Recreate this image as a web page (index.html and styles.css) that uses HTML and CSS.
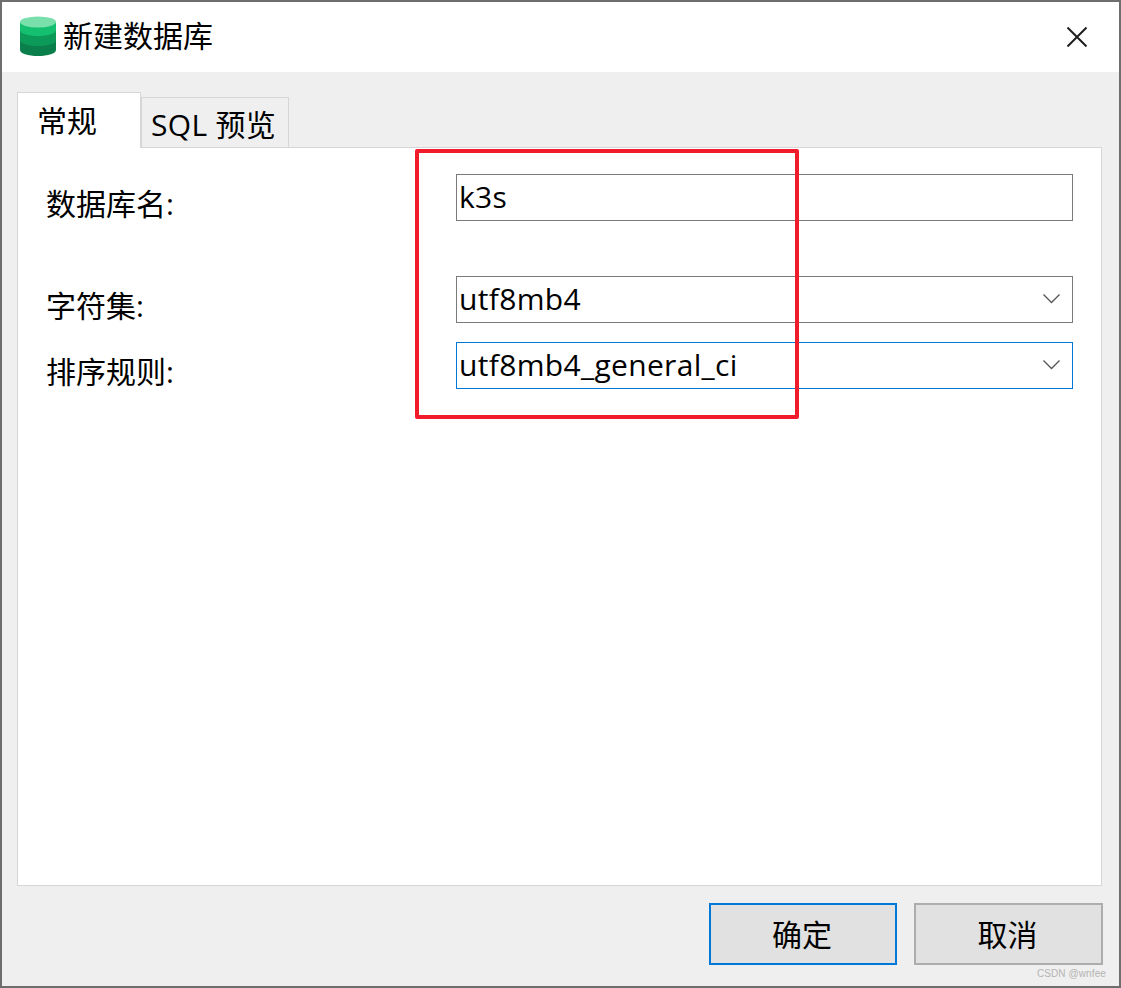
FILE: index.html
```html
<!DOCTYPE html>
<html lang="zh-CN">
<head>
<meta charset="utf-8">
<title>新建数据库</title>
<link rel="stylesheet" href="styles.css">
</head>
<body>
<div class="window">
  <header class="titlebar">
    <svg class="db-icon" width="38" height="42" viewBox="0 0 38 42" aria-hidden="true">
      <path d="M1 6v28c0 3.500 8 6 18 6s18-2.500 18-6V6z" fill="#0a7f4b"/>
      <path d="M1 6v18c0 3.500 8 6 18 6s18-2.500 18-6V6z" fill="#0c9a58"/>
      <path d="M1 6v8c0 3.500 8 6 18 6s18-2.500 18-6V6z" fill="#14bf70"/>
      <ellipse cx="19" cy="6" rx="18" ry="5.500" fill="#79e0ac"/>
    </svg>
    <span class="title">新建数据库</span>
    <svg class="close" width="20" height="20" viewBox="0 0 20 20" aria-hidden="true">
      <path d="M0.500 0.500L19.500 19.500M19.500 0.500L0.500 19.500" stroke="#1f1f1f" stroke-width="2" fill="none"/>
    </svg>
  </header>
  <main class="content">
    <nav class="tabs">
      <div class="tab active">常规</div>
      <div class="tab">SQL 预览</div>
    </nav>
    <section class="panel">
      <div class="row row-name">
        <label class="label">数据库名:</label>
        <div class="field">k3s</div>
      </div>
      <div class="row row-charset">
        <label class="label">字符集:</label>
        <div class="field">utf8mb4
          <svg class="chevron" width="17" height="10" viewBox="0 0 17 10" aria-hidden="true"><path d="M0.500 0.500L8.500 8.500L16.500 0.500" stroke="#555" stroke-width="1.300" fill="none"/></svg>
        </div>
      </div>
      <div class="row row-collation">
        <label class="label">排序规则:</label>
        <div class="field focused">utf8mb4_general_ci
          <svg class="chevron" width="17" height="10" viewBox="0 0 17 10" aria-hidden="true"><path d="M0.500 0.500L8.500 8.500L16.500 0.500" stroke="#555" stroke-width="1.300" fill="none"/></svg>
        </div>
      </div>
    </section>
    <footer class="actions">
      <button class="btn primary">确定</button>
      <button class="btn">取消</button>
    </footer>
  </main>
  <div class="highlight"></div>
  <div class="watermark">CSDN @wnfee</div>
</div>
</body>
</html>
```
FILE: styles.css
```css
* { box-sizing: border-box; }
html, body { margin: 0; padding: 0; }
body {
  width: 1121px;
  height: 988px;
  overflow: hidden;
  font-family: "Open Sans", "Noto Sans CJK SC", sans-serif;
  font-size: 30px;
  color: #000;
}
.window {
  position: relative;
  width: 1121px;
  height: 988px;
  border: 2px solid #6e6e6e;
  display: flex;
  flex-direction: column;
  background: #efefef;
}
.titlebar {
  height: 70px;
  flex: none;
  background: #fff;
  display: flex;
  align-items: center;
  padding-left: 17px;
}
.db-icon { margin-right: 6px; margin-top: -1px; }
.title { line-height: 1; margin-top: -3px; }
.close { margin-left: auto; margin-right: 32px; }
.content {
  flex: 1;
  display: flex;
  flex-direction: column;
  padding: 20px 17px 0 15px;
}
.tabs {
  display: flex;
  align-items: flex-end;
  height: 56px;
  margin-bottom: -1px;
  position: relative;
  z-index: 1;
}
.tab {
  height: 51px;
  width: 148px;
  border: 1px solid #d6d6d6;
  background: #efefef;
  text-align: left;
  padding-left: 9px;
  line-height: 54px;
  letter-spacing: 0.3px;
}
.tab.active {
  height: 56px;
  width: 124px;
  background: #fff;
  border-bottom: none;
  line-height: 56px;
  padding-left: 19px;
  letter-spacing: 0;
}
.panel {
  flex: none;
  height: 739px;
  background: #fff;
  border: 1px solid #d6d6d6;
  padding: 26px 27px 0 28px;
}
.row {
  display: flex;
  height: 47px;
}
.row-charset { margin-top: 55px; }
.row-collation { margin-top: 19px; }
.label {
  width: 410px;
  flex: none;
  line-height: 60px;
}
.field {
  width: 617px;
  flex: none;
  height: 47px;
  border: 1px solid #7a7a7a;
  background: #fff;
  padding-left: 2px;
  line-height: 44px;
  letter-spacing: 0.33px;
  position: relative;
}
.field.focused { border-color: #0078d7; }
.chevron {
  position: absolute;
  right: 12px;
  top: 17px;
}
.actions {
  display: flex;
  gap: 17px;
  padding-left: 692px;
  margin-top: 17px;
}
.btn {
  flex: none;
  width: 189px;
  height: 62px;
  border: 2px solid #adadad;
  background: #e1e1e1;
  font: inherit;
  color: #000;
  padding: 0 2px 2px 0;
}
.btn.primary {
  width: 188px;
  border-color: #0078d7;
}
.highlight {
  position: absolute;
  left: 413px;
  top: 147px;
  width: 384px;
  height: 270px;
  border: 4px solid #f01c2c;
  border-radius: 2px;
}
.watermark {
  position: absolute;
  right: 13px;
  bottom: 5px;
  font-family: "Liberation Sans", sans-serif;
  font-size: 10px;
  letter-spacing: 0.1px;
  line-height: 14px;
  color: #b4b4b4;
}
```
